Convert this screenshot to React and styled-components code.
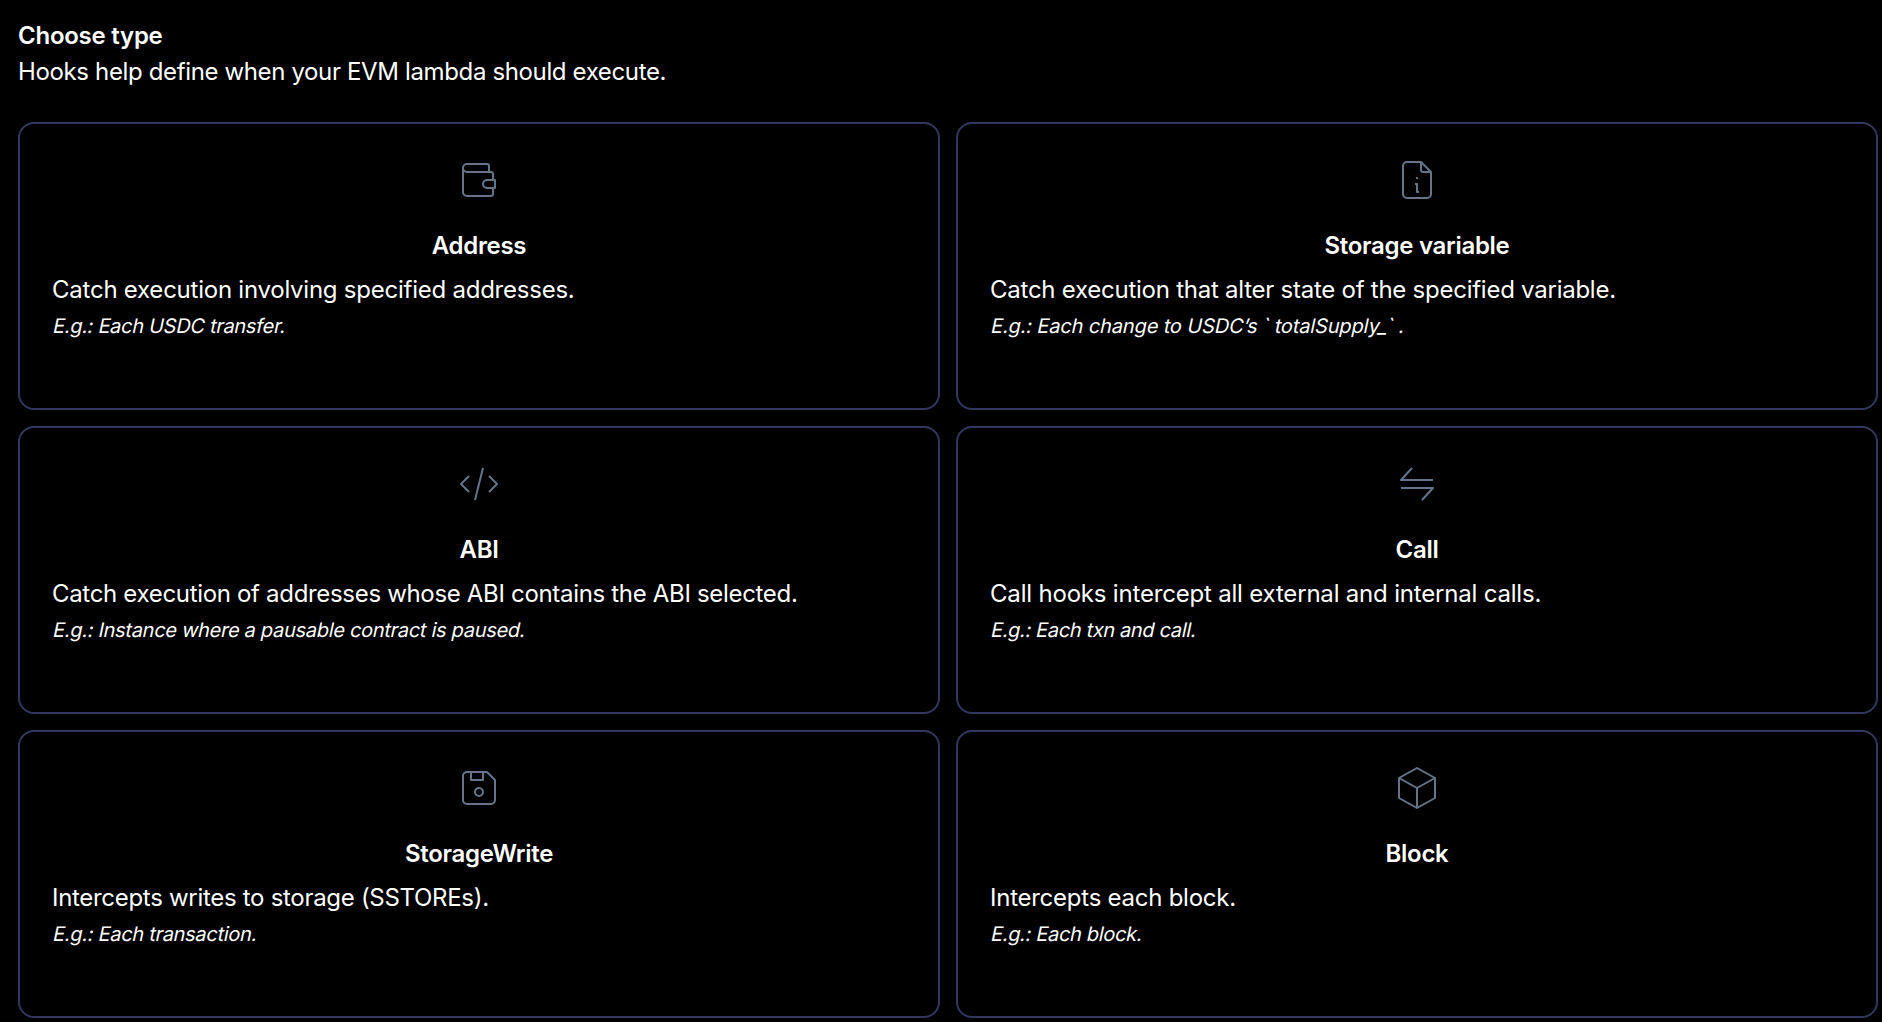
import React from 'react'
import styled, { createGlobalStyle } from 'styled-components'

const GlobalStyle = createGlobalStyle`
    * {
        box-sizing: border-box;
    }
    body {
        margin: 0;
        background: #000;
        color: #fff;
        font-family: Inter, 'Liberation Sans', sans-serif;
        overflow: hidden;
    }
`

const hooks = [
  {
    title: 'Address',
    text: 'Catch execution involving specified addresses.',
    textSpacing: -0.24,
    example: 'E.g.: Each USDC transfer.',
    exampleSpacing: -0.3,
    icon: (
      <>
        <path d="M34 16V10a2 2 0 0 0-2-2H12a4 4 0 0 0 0 8H36a2 2 0 0 1 2 2v6M38 32v6a2 2 0 0 1-2 2H12a4 4 0 0 1-4-4V12" />
        <path d="M40 24H32a4 4 0 0 0 0 8h8z" />
      </>
    ),
  },
  {
    title: 'Storage variable',
    text: 'Catch execution that alter state of the specified variable.',
    textSpacing: -0.25,
    example: 'E.g.: Each change to USDC’s ` totalSupply_` .',
    exampleSpacing: -0.14,
    icon: (
      <>
        <path d="M28 6H14a4 4 0 0 0-4 4v28a4 4 0 0 0 4 4h20a4 4 0 0 0 4-4V16z" />
        <path d="M28 6v8a2 2 0 0 0 2 2h8M22 28h2v8h2" />
        <path d="M24 21v2" />
      </>
    ),
  },
  {
    title: 'ABI',
    text: 'Catch execution of addresses whose ABI contains the ABI selected.',
    textSpacing: -0.32,
    example: 'E.g.: Instance where a pausable contract is paused.',
    exampleSpacing: -0.29,
    icon: <path d="M14 16l-8 8 8 8M28 8l-8 32M34 16l8 8-8 8" />,
  },
  {
    title: 'Call',
    text: 'Call hooks intercept all external and internal calls.',
    textSpacing: -0.19,
    example: 'E.g.: Each txn and call.',
    exampleSpacing: -0.35,
    icon: <path d="M40 20H8L19 8M8 28h32L29 40" />,
  },
  {
    title: 'StorageWrite',
    text: 'Intercepts writes to storage (SSTOREs).',
    textSpacing: -0.3,
    example: 'E.g.: Each transaction.',
    exampleSpacing: -0.29,
    icon: (
      <>
        <path d="M32 8H12a4 4 0 0 0-4 4v24a4 4 0 0 0 4 4h24a4 4 0 0 0 4-4V16z" />
        <path d="M16 8v8h12V8" />
        <circle cx="24" cy="28" r="4" />
      </>
    ),
  },
  {
    title: 'Block',
    text: 'Intercepts each block.',
    textSpacing: -0.25,
    example: 'E.g.: Each block.',
    exampleSpacing: -0.32,
    icon: <path d="M24 4l18 10v20L24 44 6 34V14zM6 14l18 10 18-10M24 24v20" />,
  },
]

function App() {
  return (
    <Page>
      <GlobalStyle />
      <Heading>Choose type</Heading>
      <Text $spacing={-0.36}>Hooks help define when your EVM lambda should execute.</Text>
      <Cards>
        {hooks.map((hook) => (
          <Card key={hook.title}>
            <Icon viewBox="0 0 48 48">{hook.icon}</Icon>
            <Title>{hook.title}</Title>
            <Text $spacing={hook.textSpacing}>{hook.text}</Text>
            <Example $spacing={hook.exampleSpacing}>{hook.example}</Example>
          </Card>
        ))}
      </Cards>
    </Page>
  )
}

export default App


const Page = styled.main`
    padding: 18px 4px 4px 18px;
`
const Heading = styled.h2`
    margin: 0;
    font-size: 24px;
    line-height: 36px;
    font-weight: 600;
    letter-spacing: -0.25px;
`
const Text = styled.p`
    margin: 0;
    font-size: 24px;
    line-height: 36px;
    letter-spacing: ${(props) => props.$spacing}px;
    white-space: nowrap;
`
const Cards = styled.div`
    display: grid;
    grid-template-columns: 1fr 1fr;
    gap: 16px;
    margin-top: 32px;
`
const Card = styled.div`
    display: flex;
    flex-direction: column;
    height: 288px;
    padding: 32px;
    border: 2px solid #33365f;
    border-radius: 16px;
    cursor: pointer;
`
const Icon = styled.svg`
    width: 48px;
    height: 48px;
    align-self: center;
    fill: none;
    stroke: #64748b;
    stroke-width: 2;
    stroke-linejoin: round;
`
const Title = styled.h3`
    margin: 24px 0 8px;
    font-size: 24px;
    line-height: 36px;
    font-weight: 600;
    letter-spacing: -0.3px;
    text-align: center;
`
// slanted upright letters, the real italic has another "a"
const Example = styled.em`
    font-size: 20px;
    line-height: 36px;
    font-style: normal;
    letter-spacing: ${(props) => props.$spacing}px;
    white-space: nowrap;
    transform: skewX(-12deg);
    transform-origin: 0 25px;
`
